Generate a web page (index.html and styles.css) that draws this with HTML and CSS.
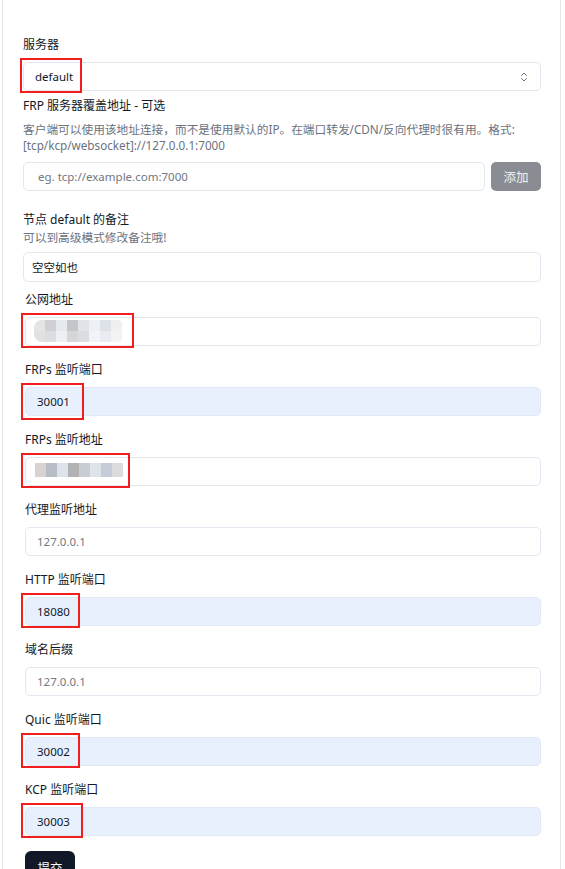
FILE: index.html
```html
<!DOCTYPE html>
<html lang="zh-CN">
<head>
    <meta charset="UTF-8">
    <meta name="viewport" content="width=device-width, initial-scale=1.0">
    <title>节点配置</title>
    <link rel="stylesheet" href="styles.css">
</head>
<body>
    <div class="card">
        <form id="nodeForm">
            <label class="label" for="server">服务器</label>
            <div class="wrap select-wrap">
                <select id="server" class="select">
                    <option>default</option>
                </select>
                <svg class="chevron" width="8" height="12" viewBox="0 0 8 12" fill="none" stroke="#6b7280" stroke-width="1" stroke-linecap="round" stroke-linejoin="round">
                    <path d="M1.5 4.5 4 2l2.5 2.5"/>
                    <path d="M1.5 7.5 4 10l2.5-2.5"/>
                </svg>
                <span class="mark" style="width:62px"></span>
            </div>

            <label class="label label-override">FRP 服务器覆盖地址 - 可选</label>
            <p class="desc desc-override">客户端可以使用该地址连接，而不是使用默认的IP。在端口转发/CDN/反向代理时很有用。格式: [tcp/kcp/websocket]://127.0.0.1:7000</p>
            <div class="add-row">
                <input type="text" class="input" placeholder="eg. tcp://example.com:7000">
                <button type="button" class="btn-add">添加</button>
            </div>

            <label class="label label-note">节点 default 的备注</label>
            <p class="desc">可以到高级模式修改备注哦!</p>
            <input type="text" class="input input-note" value="空空如也">

            <div class="fields">
                <div class="field">
                    <label class="label">公网地址</label>
                    <div class="wrap">
                        <input type="text" class="input" value="">
                        <div class="mosaic mosaic-two">
                            <i style="background:#e4e4e4"></i><i style="background:#d0d0d4"></i><i style="background:#e6eaee"></i><i style="background:#c5c6ca"></i><i style="background:#e0e3e7"></i><i style="background:#eef0f4"></i><i style="background:#dde2e8"></i><i style="background:#f0f0f0"></i>
                            <i style="background:#e2e0e0"></i><i style="background:#dcdde0"></i><i style="background:#edf0f4"></i><i style="background:#d6d5d8"></i><i style="background:#dcdde2"></i><i style="background:#f1f3f7"></i><i style="background:#e8ebef"></i><i style="background:#f3f3f3"></i>
                        </div>
                        <span class="mark" style="width:113px"></span>
                    </div>
                </div>

                <div class="field">
                    <label class="label">FRPs 监听端口</label>
                    <div class="wrap">
                        <input type="text" class="input autofill" value="30001">
                        <span class="mark mark-tall" style="width:63px"></span>
                    </div>
                </div>

                <div class="field">
                    <label class="label">FRPs 监听地址</label>
                    <div class="wrap">
                        <input type="text" class="input" value="">
                        <div class="mosaic mosaic-one">
                            <i style="background:#d8d3d0"></i><i style="background:#b8bcc4"></i><i style="background:#dde3ea"></i><i style="background:#b2b2b4"></i><i style="background:#c8cdd5"></i><i style="background:#dfe4ea"></i><i style="background:#c6ccd7"></i><i style="background:#dcdcde"></i>
                        </div>
                        <span class="mark" style="width:109px"></span>
                    </div>
                </div>

                <div class="field">
                    <label class="label">代理监听地址</label>
                    <input type="text" class="input" placeholder="127.0.0.1">
                </div>

                <div class="field">
                    <label class="label">HTTP 监听端口</label>
                    <div class="wrap">
                        <input type="text" class="input autofill" value="18080">
                        <span class="mark" style="width:59px"></span>
                    </div>
                </div>

                <div class="field">
                    <label class="label">域名后缀</label>
                    <input type="text" class="input" placeholder="127.0.0.1">
                </div>

                <div class="field">
                    <label class="label">Quic 监听端口</label>
                    <div class="wrap">
                        <input type="text" class="input autofill" value="30002">
                        <span class="mark" style="width:59px"></span>
                    </div>
                </div>

                <div class="field">
                    <label class="label">KCP 监听端口</label>
                    <div class="wrap">
                        <input type="text" class="input autofill" value="30003">
                        <span class="mark" style="width:62px"></span>
                    </div>
                </div>

                <button type="submit" class="btn-submit">提交</button>
            </div>
        </form>
    </div>
</body>
</html>
```

FILE: styles.css
```css
* {
    box-sizing: border-box;
}
body {
    margin: 0;
    background: #fff;
    font-family: "Noto Sans", "Noto Sans CJK SC", sans-serif;
    color: #111827;
}
.card {
    margin-left: 2px;
    width: 559px;
    border: 1px solid #e5e7eb;
    border-top: 0;
    padding: 36px 19px 40px 20px;
}
form {
    display: flex;
    flex-direction: column;
}
.label {
    display: block;
    font-size: 12px;
    line-height: 18px;
    color: #111827;
}
.desc {
    margin: 0;
    font-size: 11.7px;
    line-height: 16px;
    color: #6b7280;
}
.wrap {
    position: relative;
}
.select-wrap {
    margin-top: 8px;
}
.select {
    display: block;
    width: 100%;
    height: 29px;
    padding: 0 11px;
    border: 1px solid #e2e8f0;
    border-radius: 5px;
    background: #fff;
    font: inherit;
    font-size: 11.5px;
    color: #111827;
    appearance: none;
    outline: none;
}
.chevron {
    position: absolute;
    right: 13px;
    top: 9px;
}
.input {
    display: block;
    width: 100%;
    height: 29px;
    padding: 0 11px;
    border: 1px solid #e2e8f0;
    border-radius: 5px;
    background: #fff;
    font: inherit;
    font-size: 11.5px;
    color: #111827;
    outline: none;
}
.input::placeholder {
    color: #737882;
}
.autofill {
    background: #e8f0fe;
    border-color: #e2e9f6;
}
.label-override {
    margin-top: 6px;
}
.desc-override {
    margin-top: 6px;
}
.add-row {
    display: flex;
    gap: 6px;
    margin-top: 9px;
}
.add-row .input {
    flex: 1;
    padding-left: 14px;
}
.btn-add {
    width: 50px;
    height: 29px;
    border: 0;
    border-radius: 5px;
    background: #898c92;
    color: #eef0f2;
    font: inherit;
    font-size: 12.5px;
}
.label-note {
    margin-top: 20px;
}
.input-note {
    margin-top: 7px;
    height: 30px;
    padding-left: 8px;
}
.fields {
    display: flex;
    flex-direction: column;
    padding-left: 2px;
    margin-top: 9px;
}
.field {
    display: flex;
    flex-direction: column;
    gap: 8px;
    margin-bottom: 15px;
}
.mark {
    position: absolute;
    left: -4px;
    top: -4px;
    height: 35px;
    border: 2px solid #f21d1d;
    pointer-events: none;
}
.select-wrap .mark {
    left: -3px;
}
.mark-tall {
    height: 37px;
}
.mosaic {
    position: absolute;
    display: grid;
    grid-template-columns: repeat(8, 11px);
    filter: blur(0.7px);
    pointer-events: none;
}
.mosaic-two {
    left: 9px;
    top: 3px;
    grid-auto-rows: 11px;
    border-radius: 8px 4px 4px 8px;
    overflow: hidden;
}
.mosaic-one {
    left: 10px;
    top: 6px;
    grid-auto-rows: 14px;
}
.btn-submit {
    align-self: flex-start;
    width: 50px;
    height: 32px;
    border: 0;
    border-radius: 6px;
    background: #111827;
    color: #fff;
    font: inherit;
    font-size: 12.5px;
}
```
